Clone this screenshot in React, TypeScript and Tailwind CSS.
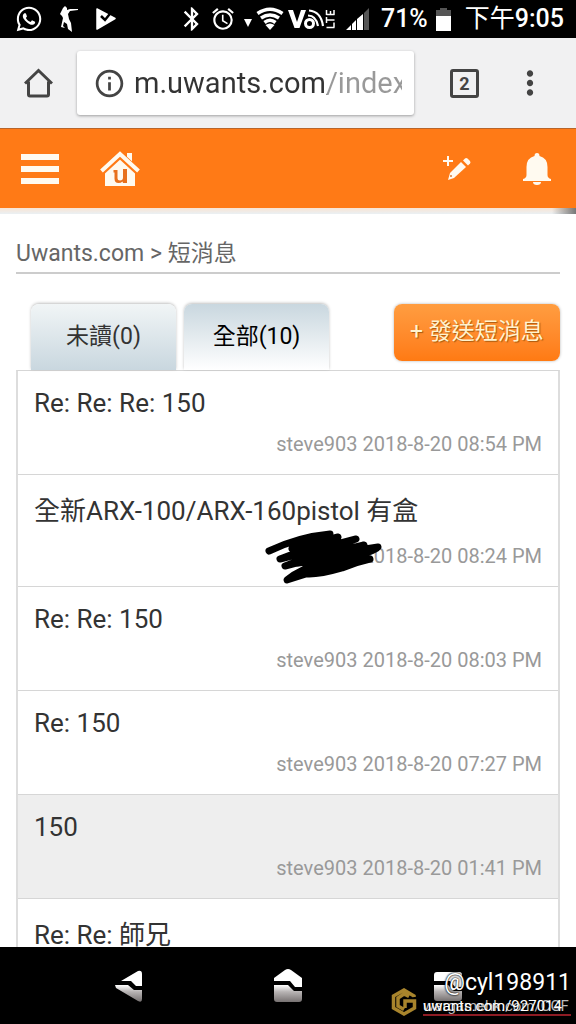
import type { ReactNode } from "react";
import { FaWhatsapp } from "react-icons/fa";
import { MdAlarm, MdBluetooth, MdInfoOutline, MdMoreVert } from "react-icons/md";

type MessageItem = {
  title: string;
  from?: string;
  date?: string;
  tall?: boolean;
  active?: boolean;
};

const messages: MessageItem[] = [
  { title: "Re: Re: Re: 150", from: "steve903", date: "2018-8-20 08:54 PM" },
  { title: "全新ARX-100/ARX-160pistol 有盒", date: "2018-8-20 08:24 PM", tall: true },
  { title: "Re: Re: 150", from: "steve903", date: "2018-8-20 08:03 PM" },
  { title: "Re: 150", from: "steve903", date: "2018-8-20 07:27 PM" },
  { title: "150", from: "steve903", date: "2018-8-20 01:41 PM", active: true },
  { title: "Re: Re: 師兄", tall: true },
];

function StatusBar() {
  return (
    <div className="flex h-[38px] shrink-0 items-center justify-between bg-black pr-3 pl-[15px] text-white">
      <div className="flex items-center gap-4">
        <FaWhatsapp size={28} />
        <svg width="20" height="26" viewBox="0 0 20 26" fill="currentColor">
          <path d="M4 2l2-2 2 2v2l3-1h8v1l-8 1-2 3 1 5 2 4 1 9-4-3-1-5-3-2-1 4 2 2-4-1 2-9-1-2-2-2 2-4z" />
        </svg>
        <svg width="22" height="22" viewBox="0 0 22 22">
          <path d="M2 1l18 9.500L2 21z" fill="#fff" stroke="#fff" strokeWidth="1.500" strokeLinejoin="round" />
          <path d="M6 8l4 4 8-10" fill="none" stroke="#000" strokeWidth="2.500" />
        </svg>
      </div>
      <div className="flex items-center">
        <MdBluetooth size={28} />
        <MdAlarm size={26} className="ml-1" />
        <svg width="8" height="8" viewBox="0 0 8 8" className="mt-2 ml-2" fill="currentColor">
          <path d="M0 0h8L4 8z" />
        </svg>
        <svg width="28" height="24" viewBox="0 0 28 24" className="ml-1" fill="none" stroke="currentColor" strokeWidth="3.600">
          <path d="M1.500 6.500Q14-2 26.500 6.500M5 11Q14 5 23 11M8.500 15.500Q14 11 19.500 15.500" />
          <path d="M14 23l-4.500-5Q14 15 18.500 18z" fill="currentColor" stroke="none" />
        </svg>
        <svg width="50" height="24" viewBox="0 0 50 24" className="ml-1" fill="none" stroke="currentColor">
          <path d="M0 3h5l4 12 4-12h5l-6.500 18h-5z" fill="currentColor" stroke="none" />
          <circle cx="21.500" cy="16.500" r="4" strokeWidth="3" />
          <path d="M20 8.500q8 0 10 10.500M21 3.500q12 1 14 15.500" strokeWidth="2.200" />
          <path d="M38.500 20.500h8M46 20.500v-5M38.500 13h8M38.500 10v6M38.500 7.500h8M38.500 8V3M42.500 8V4M46 8V3" strokeWidth="1.500" />
        </svg>
        <svg width="23" height="23" viewBox="0 0 23 23" className="ml-2">
          <path d="M18 5v17h5V0z" fill="#555" />
          <path d="M0 22h5v-5zM6 16v6h4V12zM11 11v11h6V6z" fill="#fff" />
        </svg>
        <span className="ml-3 text-[25px] leading-[38px] font-medium">71%</span>
        <svg width="15" height="23" viewBox="0 0 15 23" className="ml-2">
          <path d="M4 0h7v2h4v6H0V2h4z" fill="#555" />
          <path d="M0 8h15v15H0z" fill="#fff" />
        </svg>
        <span className="ml-3.5 text-[25px] leading-[38px] font-medium whitespace-nowrap">
          <span className="font-normal">下午</span>9:05
        </span>
      </div>
    </div>
  );
}

function BrowserBar() {
  return (
    <div className="flex h-[90px] shrink-0 items-center bg-[#f1f1f2] pr-[27px] pl-6 text-[#444]">
      <button aria-label="Home" className="shrink-0">
        <svg width="29" height="30" viewBox="0 0 29 30" fill="none" stroke="currentColor" strokeWidth="3">
          <path d="M1 15.500L14.500 2.500 28 15.500M4.500 13.500v13q0 1.500 1.500 1.500h17q1.500 0 1.500-1.500v-13" />
        </svg>
      </button>
      <div className="ml-6 flex h-16 min-w-0 flex-1 items-center rounded-[3px] bg-white pr-3 pl-4 shadow-[0_1px_3px_rgba(0,0,0,0.35)]">
        <MdInfoOutline size={33} className="shrink-0" />
        <input
          aria-label="Address"
          readOnly
          value="m.uwants.com/index.php"
          className="ml-2 h-12 w-full min-w-0 bg-linear-to-r from-[#333] from-[193px] to-[#999] to-[193px] bg-clip-text text-[29px] text-transparent outline-none"
        />
      </div>
      <button aria-label="Tabs" className="ml-9 h-[29px] w-[29px] shrink-0 rounded-[3px] border-3 border-[#444] text-[18px] leading-[23px] font-bold">
        2
      </button>
      <button aria-label="More" className="ml-8 shrink-0">
        <MdMoreVert size={38} />
      </button>
    </div>
  );
}

function SiteHeader() {
  return (
    <header className="shrink-0">
      <div className="flex h-20 items-center border-t border-[#b8652a] bg-[#ff7a16] pr-6 pl-5 text-[#fffaf0]">
        <button aria-label="Menu" className="flex h-[30px] w-10 flex-col justify-between px-px">
          <span className="h-[6px] w-full bg-current" />
          <span className="h-[6px] w-full bg-current" />
          <span className="h-[6px] w-full bg-current" />
        </button>
        <a href="#home" aria-label="Uwants home" className="ml-10">
          <svg width="40" height="36" viewBox="0 0 40 36">
            <path d="M27 2h5v12l-5-5z" fill="currentColor" />
            <path d="M5 20L20 7l15 13v15H5z" fill="currentColor" />
            <path d="M1.500 21L20 4l18.500 17" fill="none" stroke="#ff7a16" strokeWidth="7" />
            <path d="M1.500 20L20 3l18.500 17" fill="none" stroke="currentColor" strokeWidth="4" />
            <path d="M13.500 19h4v8q0 2.500 2.500 2.500 3 0 3-3V18h4v14h-4l-.5-1.500Q21 32 18.500 32q-4 0-4-4.500v-6h-1z" fill="#e8701c" />
          </svg>
        </a>
        <button aria-label="New post" className="ml-auto">
          <svg width="30" height="28" viewBox="0 0 30 28" fill="currentColor">
            <path d="M5 1h2v4h4v2H7v4H5V7H1V5h4z" />
            <path d="M19 7l5 5-12 11-6 2 2-7z" />
            <path d="M21 5.500l2-2q1-1 2.500 0l2.500 2.500q1 1.500 0 2.500l-2 2z" />
            <circle cx="9" cy="21" r="1" fill="#d97a35" />
          </svg>
        </button>
        <button aria-label="Notifications" className="ml-[50px]">
          <svg width="30" height="34" viewBox="0 0 30 34" fill="currentColor">
            <path d="M12.500 4q0-3 2.500-3t2.500 3q8 2 8 11v8q0 3 3.500 4v2H1v-2q3.500-1 3.500-4v-8q0-9 8-11z" />
            <path d="M11 30h8q0 3-4 3t-4-3z" />
          </svg>
        </button>
      </div>
      <div className="flex h-[6px] justify-end bg-linear-to-b from-[#f9e4d3] to-[#eaf0f4]">
        <div className="w-6 bg-linear-to-r from-transparent to-[#777]" />
      </div>
    </header>
  );
}

function Scribble() {
  return (
    <svg
      width="120"
      height="56"
      viewBox="0 0 120 56"
      className="absolute top-[-10px] right-[-22px]"
      fill="none"
      stroke="#000"
      strokeWidth="7"
      strokeLinecap="round"
      strokeLinejoin="round"
    >
      <path d="M5 22Q34 8 66 5L28 20 74 8 16 30 92 10 21 37 100 16 50 28 114 18Q112 22 90 27L50 40 106 30Q92 33 78 39 54 46 42 45L23 51Q36 40 60 34" />
      <path d="M34 24L84 17 34 32 88 24 44 38 82 30" strokeWidth="11" />
    </svg>
  );
}

function Message({ title, from, date, tall, active }: MessageItem) {
  return (
    <li className={active ? "border-b border-[#d6d6d6] bg-[#eee]" : "border-b border-[#d6d6d6]"}>
      <a href="#message" className="block px-4 pt-3 pb-[13px]">
        <div className={tall ? "text-[26px] leading-[48px] text-[#333]" : "text-[26px] leading-10 text-[#333]"}>{title}</div>
        <div className="mt-1 flex h-[34px] justify-end text-[20px] leading-[34px] text-[#999]">
          {from && <span>{from}&nbsp;</span>}
          {date && !from && (
            <span className="relative w-[88px]">
              <Scribble />
            </span>
          )}
          <span>{date}</span>
        </div>
      </a>
    </li>
  );
}

function Tab({ children, className }: { children: ReactNode; className: string }) {
  return (
    <button className={`h-[66px] w-[145px] rounded-t-lg text-[23px] leading-8 shadow-[0_-1px_3px_rgba(0,0,0,0.25)] ${className}`}>
      {children}
    </button>
  );
}

function Inbox() {
  return (
    <main className="min-h-0 flex-1 overflow-hidden bg-white px-4 pt-6">
      <nav className="border-b-2 border-[#ccc] pb-0.5 text-[23px] leading-8 text-[#666]">
        <a href="#home">Uwants.com</a> &gt; <a href="#inbox">短消息</a>
      </nav>
      <div className="flex items-start pt-[30px] pl-[15px]">
        <Tab className="bg-linear-to-b from-[#f1f5f6] to-[#c9d7df] text-[#333]">未讀(0)</Tab>
        <Tab className="ml-2 bg-linear-to-b from-[#c9d7df] to-white text-black">全部(10)</Tab>
        <button className="ml-auto h-[57px] w-[166px] rounded-lg bg-linear-to-b from-[#ff9d40] to-[#ff7a12] text-[23px] whitespace-nowrap text-[#fff3cf] shadow-[0_0_3px_rgba(0,0,0,0.3)] [text-shadow:1px_1px_1px_#a85a10]">
          + 發送短消息
        </button>
      </div>
      <ul className="border-x-2 border-t border-x-[#ddd] border-t-[#d6d6d6]">
        {messages.map((m) => (
          <Message key={m.title} {...m} />
        ))}
      </ul>
    </main>
  );
}

function AndroidNav() {
  return (
    <div className="relative flex h-[77px] shrink-0 items-center justify-between bg-black px-[112px]">
      <svg className="absolute h-0 w-0">
        <defs>
          <linearGradient id="metal" x1="0" y1="0" x2="0" y2="1">
            <stop offset="0" stopColor="#fff" />
            <stop offset="0.400" stopColor="#b8b4b4" />
            <stop offset="1" stopColor="#777272" />
          </linearGradient>
        </defs>
      </svg>
      <button aria-label="Back">
        <svg width="32" height="34" viewBox="0 0 32 34">
          <path d="M9 12L26 2q4-1 4 3v12h-6l-5-5z" fill="#fff" />
          <path d="M3 16h13l6 5h8v9q0 4-4 2L4 19z" fill="url(#metal)" />
        </svg>
      </button>
      <button aria-label="Home">
        <svg width="32" height="34" viewBox="0 0 32 34">
          <path d="M2 12V9L13 1q3-2 6 0l11 8v9h-7l-5-6z" fill="#fff" />
          <path d="M2 16h14l6 6h8v8q0 3-3 3H5q-3 0-3-3z" fill="url(#metal)" />
        </svg>
      </button>
      <button aria-label="Recent apps">
        <svg width="32" height="34" viewBox="0 0 32 34">
          <path d="M2 12V6q0-3 3-3h22q3 0 3 3v12h-7l-5-6z" fill="#fff" />
          <path d="M2 16h14l6 6h8v7q0 3-3 3H5q-3 0-3-3z" fill="url(#metal)" />
        </svg>
      </button>
      {/* poster's watermark */}
      <div className="absolute right-[5px] bottom-2 flex items-end gap-[6px] text-white">
        <svg width="26" height="28" viewBox="0 0 26 28" fill="none" stroke="#a8842c" strokeWidth="3.500">
          <path d="M23 9V8L13 2 2.500 8v12L13 26l10.500-6v-7H14v7M18 8.500l-5-2.500-6 4v8l6 3.500" />
        </svg>
        <div className="flex flex-col items-end">
          <span className="text-[23px] leading-[30px] [text-shadow:0_0_2px_#000,0_0_2px_#000]">@cyl198911</span>
          <div className="grid w-[148px] border-b-2 border-[#8e1c24] text-[15px] leading-4 whitespace-nowrap">
            <span className="col-start-1 row-start-1 text-[#bbb]">wargamehk.com/CGF</span>
            <span className="col-start-1 row-start-1">uwants.com/927014</span>
          </div>
        </div>
      </div>
    </div>
  );
}

export default function App() {
  return (
    <div className="flex h-screen flex-col overflow-hidden bg-white font-[Roboto,'Noto_Sans_CJK_TC',sans-serif]">
      <StatusBar />
      <BrowserBar />
      <SiteHeader />
      <Inbox />
      <AndroidNav />
    </div>
  );
}
